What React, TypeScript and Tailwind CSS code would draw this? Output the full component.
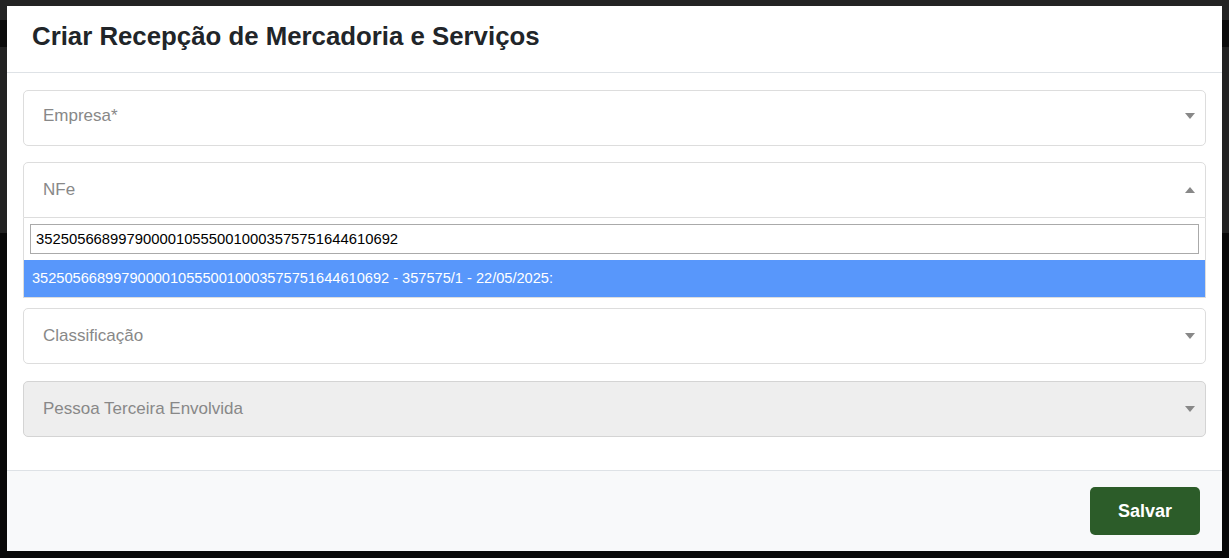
import React from 'react';

type FieldProps = {
  label: string;
  open?: boolean;
  disabled?: boolean;
  className?: string;
  shift?: string;
};

function Caret({ up }: { up?: boolean }) {
  return up ? (
    <span className="h-0 w-0 border-x-[5px] border-b-[6px] border-x-transparent border-b-[#888]" />
  ) : (
    <span className="h-0 w-0 border-x-[5px] border-t-[6px] border-x-transparent border-t-[#888]" />
  );
}

function Field({ label, open, disabled, className, shift }: FieldProps) {
  return (
    <div
      className={[
        'flex h-[56px] items-center justify-between border pl-[19px] pr-[10px]',
        open ? 'rounded-t-[5px]' : 'rounded-[5px]',
        disabled ? 'border-[#d4d4d4] bg-[#eee]' : 'border-[#ddd] bg-white',
        shift ?? 'pb-[1px]',
        className ?? '',
      ].join(' ')}
    >
      <span className="text-[17px] text-[#888]">{label}</span>
      <Caret up={open} />
    </div>
  );
}

const chave = '35250566899790000105550010003575751644610692';

export default function App() {
  return (
    <div className="relative h-[558px] w-[1229px] overflow-hidden bg-[#0a0a0a] font-['Liberation_Sans',Arial,sans-serif]">
      {/* page behind the backdrop */}
      <div className="absolute inset-0 flex flex-col">
        <div className="h-[20px] bg-[#232323]" />
        <div className="h-[27px] bg-[#0b0b0b]" />
        <div className="h-[186px] bg-[#222]" />
        <div className="flex-1 bg-[#080808]" />
      </div>

      <div className="absolute left-[7px] top-[6px] flex h-[545px] w-[1215px] flex-col bg-white">
        <div className="flex h-[67px] shrink-0 items-center border-b border-[#dee2e6] pb-[5px] pl-[25px]">
          <h1 className="text-[25.8px] font-bold text-[#212529]">Criar Recepção de Mercadoria e Serviços</h1>
        </div>

        <div className="flex-1 px-[16px] pt-[17px]">
          <Field label="Empresa*" shift="pb-[4px]" className="mb-[16px]" />

          <div className="relative mb-[16px]">
            <Field label="NFe" open shift="pb-0" />
            <div className="absolute left-0 right-0 top-full z-10 border-x border-b border-[#ddd] bg-white">
              <div className="px-[6px] py-[6px]">
                <div className="flex h-[30px] items-center border border-[#aaa] px-[5px] text-[14.8px] text-black">
                  {chave}
                </div>
              </div>
              <div className="flex h-[37px] items-center bg-[#5897fb] pl-[8px] text-[14.6px] text-white">
                {chave} - 357575/1 - 22/05/2025:
              </div>
            </div>
          </div>

          <Field label="Fornecedor" className="mb-[18px]" />
          <Field label="Classificação" className="mb-[17px]" />
          <Field label="Pessoa Terceira Envolvida" disabled />
        </div>

        <div className="flex h-[81px] shrink-0 items-start justify-end border-t border-[#dee2e6] bg-[#f8f9fa] pr-[22px] pt-[16px]">
          <button
            type="button"
            className="flex h-[48px] w-[110px] items-center justify-center rounded-[5px] bg-[#2c5c29] text-[18px] font-bold text-white"
          >
            Salvar
          </button>
        </div>
      </div>
    </div>
  );
}
